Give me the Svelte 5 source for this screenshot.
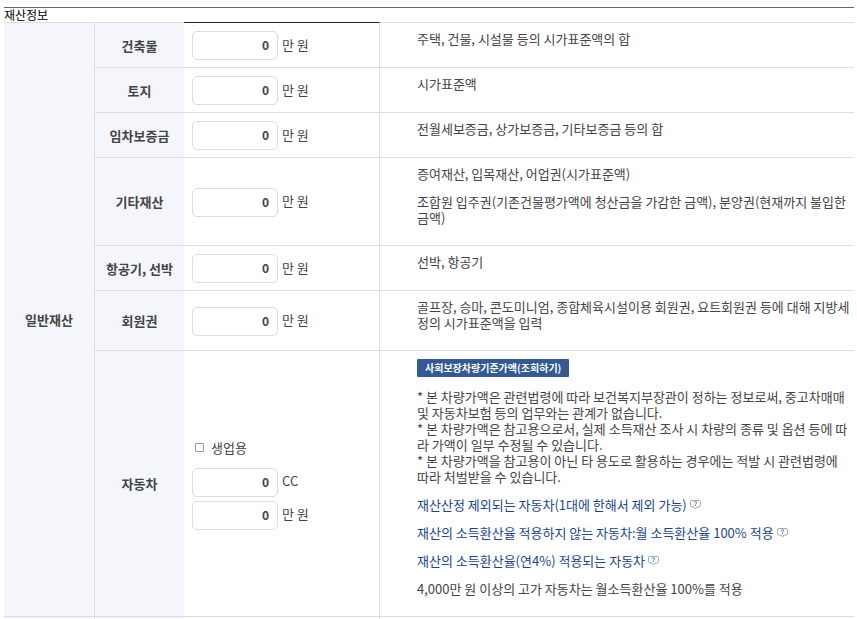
<script>
    let rows = [
        { name: "건축물", desc: ["주택, 건물, 시설물 등의 시가표준액의 합"] },
        { name: "토지", desc: ["시가표준액"] },
        { name: "임차보증금", desc: ["전월세보증금, 상가보증금, 기타보증금 등의 합"] },
        {
            name: "기타재산",
            desc: [
                "증여재산, 입목재산, 어업권(시가표준액)",
                "조합원 입주권(기존건물평가액에 청산금을 가감한 금액), 분양권(현재까지 불입한 금액)",
            ],
        },
        { name: "항공기, 선박", desc: ["선박, 항공기"] },
        {
            name: "회원권",
            desc: ["골프장, 승마, 콘도미니엄, 종합체육시설이용 회원권, 요트회원권 등에 대해 지방세정의 시가표준액을 입력"],
        },
    ];
    let values = rows.map(() => "0");
    let business = false;
    let cc = "0";
    let price = "0";

    let notes = [
        "* 본 차량가액은 관련법령에 따라 보건복지부장관이 정하는 정보로써, 중고차매매 및 자동차보험 등의 업무와는 관계가 없습니다.",
        "* 본 차량가액은 참고용으로서, 실제 소득재산 조사 시 차량의 종류 및 옵션 등에 따라 가액이 일부 수정될 수 있습니다.",
        "* 본 차량가액을 참고용이 아닌 타 용도로 활용하는 경우에는 적발 시 관련법령에 따라 처벌받을 수 있습니다.",
    ];
    let links = [
        "재산산정 제외되는 자동차(1대에 한해서 제외 가능)",
        "재산의 소득환산율 적용하지 않는 자동차:월 소득환산율 100% 적용",
        "재산의 소득환산율(연4%) 적용되는 자동차",
    ];
</script>

<table>
    <caption>재산정보</caption>
    <colgroup>
        <col class="c1" />
        <col class="c2" />
        <col class="c3" />
        <col />
    </colgroup>
    <tbody>
        {#each rows as row, i}
            <tr>
                {#if i == 0}
                    <th class="group" rowspan={rows.length + 1} scope="rowgroup">일반재산</th>
                {/if}
                <th scope="row"><label for={"asset" + i}>{row.name}</label></th>
                <td class="value">
                    <div class="field">
                        <input type="text" id={"asset" + i} bind:value={values[i]} />
                        <span class="unit">만 원</span>
                    </div>
                </td>
                <td class="desc">
                    {#each row.desc as text}
                        <p>{text}</p>
                    {/each}
                </td>
            </tr>
        {/each}
        <tr>
            <th scope="row">자동차</th>
            <td class="value">
                <label class="check">
                    <input type="checkbox" bind:checked={business} />
                    생업용
                </label>
                <div class="field">
                    <input type="text" id="cc" bind:value={cc} />
                    <label class="unit" for="cc">CC</label>
                </div>
                <div class="field">
                    <input type="text" id="price" bind:value={price} />
                    <label class="unit" for="price">만 원</label>
                </div>
            </td>
            <td class="desc">
                <button type="button">사회보장차량기준가액(조회하기)</button>
                <p>
                    {#each notes as note}
                        <span class="note">{note}</span>
                    {/each}
                </p>
                {#each links as link}
                    <p>
                        <a href="#help">{link}<svg width="11" height="10" viewBox="0 0 11 10">
                            <path d="M2 .5h7q1.500 0 1.500 1.500v3.500q0 1.500-1.500 1.500h-2l-1.500 2-1.500-2h-2q-1.500 0-1.500-1.500v-3.500q0-1.500 1.500-1.500z" fill="#fff" stroke="#aaa" />
                            <path d="M4.200 2.700q0-1 1.300-1t1.300 1q0 .6-.7.900t-.6.700M5.500 5v1" fill="none" stroke="#3c7fc0" />
                        </svg></a>
                    </p>
                {/each}
                <p>4,000만 원 이상의 고가 자동차는 월소득환산율 100%를 적용</p>
            </td>
        </tr>
        <tr class="next">
            <th></th>
            <th></th>
            <td class="value"></td>
            <td></td>
        </tr>
    </tbody>
</table>

<style>
:global(body){
    margin: 0;
    padding: 7px 3px 0 4px;
    background: #fff;
}
table{
    width: 100%;
    table-layout: fixed;
    border-collapse: separate;
    border-spacing: 0;
    font-family: "Noto Sans CJK KR", sans-serif;
    font-size: 13px;
    line-height: 16px;
    color: #444;
}
caption{
    border-top: 1px solid #666;
    font-size: 12px;
    line-height: 14px;
    color: #000;
    text-align: left;
}
.c1{
    width: 91px;
}
.c2{
    width: 89px;
}
.c3{
    width: 196px;
}
th, td{
    padding: 8px 8px 7px;
    border-bottom: 1px solid #ddd;
}
th{
    padding-left: 0;
    padding-right: 0;
    background: #f5f6fc;
    font-weight: 600;
    text-align: center;
}
th.group, .next th:first-child{
    border-right: 1px solid #ddd;
}
tr:first-child th, tr:first-child td{
    border-top: 1px solid #ddd;
}
tr:first-child .value{
    border-top-color: #222;
}
.value{
    border-right: 1px solid #ddd;
}
.desc{
    padding-left: 37px;
    padding-right: 4px;
    vertical-align: top;
}
.next th, .next td{
    height: 2px;
    padding: 0;
    border-bottom: 0;
}
p{
    margin: 0 0 12px;
}
.note{
    display: block;
}
.field{
    display: flex;
    align-items: center;
    gap: 4px;
}
.field + .field{
    margin-top: 4px;
}
.field input{
    box-sizing: border-box;
    width: 86px;
    height: 29px;
    margin: 0;
    padding: 0 8px 2px;
    border: 1px solid #ddd;
    border-radius: 5px;
    background: #fff;
    color: #444;
    font-family: inherit;
    font-size: 12px;
    font-weight: 600;
    text-align: right;
}
.unit{
    padding-bottom: 2px;
}
.check{
    display: flex;
    align-items: center;
    gap: 7px;
    height: 18px;
    margin-bottom: 11px;
    padding-left: 3px;
}
.check input{
    appearance: none;
    box-sizing: border-box;
    width: 9px;
    height: 9px;
    margin: 0;
    border: 1px solid #999;
    border-radius: 1px;
    background: #fff;
}
.check input:checked{
    background: #345a95;
}
button{
    display: block;
    height: 18px;
    margin: 0 0 12px;
    padding: 0 8px;
    border: 0;
    border-radius: 1px;
    background: #345a95;
    color: #fff;
    font-family: inherit;
    font-size: 10px;
    font-weight: 600;
    line-height: 18px;
    cursor: pointer;
}
a{
    color: #1b458f;
    text-decoration: none;
}
a:hover{
    text-decoration: underline;
}
svg{
    margin-left: 3px;
    vertical-align: 0;
}
</style>
